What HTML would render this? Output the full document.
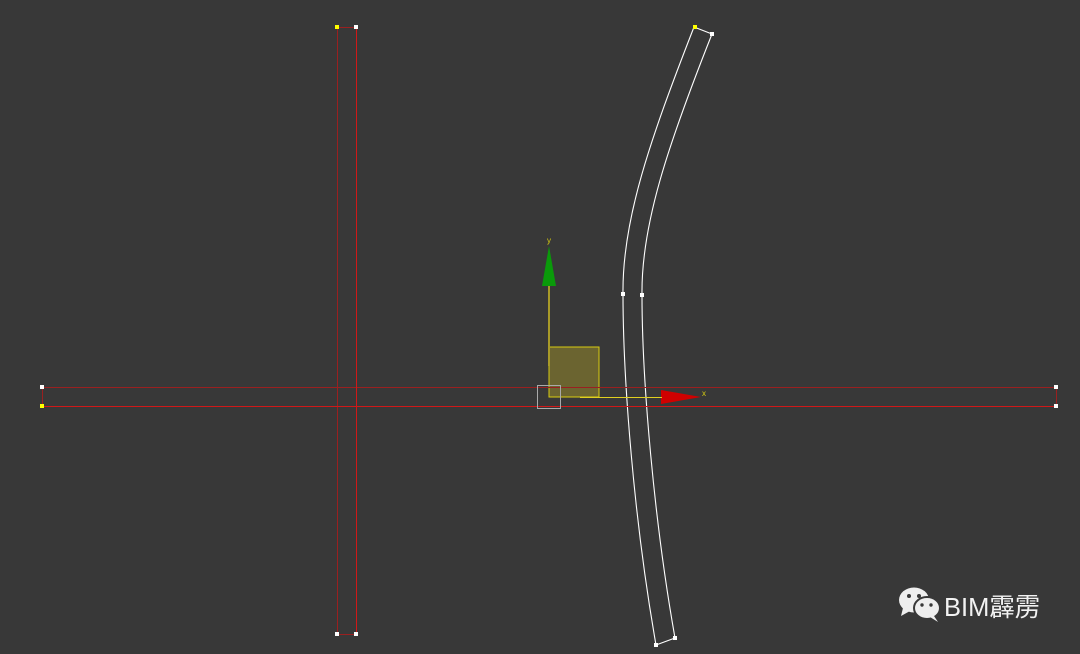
<!DOCTYPE html>
<html><head><style>
html,body{margin:0;padding:0;background:#383838;width:1080px;height:654px;overflow:hidden}
.t{position:absolute;left:944px;top:587px;font:25.5px "Liberation Sans","Noto Sans CJK SC",sans-serif;color:#f2f2f2}
</style></head><body>
<svg width="1080" height="654" style="position:absolute;left:0;top:0" shape-rendering="crispEdges">
<rect x="549" y="347" width="50" height="50" fill="#6b6430" stroke="#d8cc10" stroke-width="1"/>
<g fill="none" stroke="#fff" stroke-width="1.1" shape-rendering="auto">
<path d="M694,27 C650,140 622,220 623,294 C623,380 634,520 656,645"/>
<path d="M712,34 C668,145 641,225 642,295 C642,380 654,520 675,638"/>
<path d="M694,27 L712,34 M656,645 L675,638"/>
</g>
<g fill="#9a2020">
<rect x="337" y="27" width="1" height="607"/>
<rect x="337" y="27" width="19" height="1"/>
<rect x="337" y="634" width="19" height="1"/>
<rect x="42" y="387" width="1014" height="1"/>
<rect x="42" y="387" width="1" height="19"/>
<rect x="1056" y="387" width="1" height="19"/>
</g>
<g fill="#d01818">
<rect x="356" y="27" width="1" height="607"/>
<rect x="42" y="406" width="1014" height="1"/>
</g>
<g fill="#fff"><rect x="621" y="292" width="4" height="4"/><rect x="640" y="293" width="4" height="4"/><rect x="710" y="32" width="4" height="4"/><rect x="654" y="643" width="4" height="4"/><rect x="673" y="636" width="4" height="4"/>
<rect x="354" y="25" width="4" height="4"/><rect x="335" y="632" width="4" height="4"/><rect x="354" y="632" width="4" height="4"/><rect x="40" y="385" width="4" height="4"/><rect x="1054" y="385" width="4" height="4"/><rect x="1054" y="404" width="4" height="4"/></g>
<rect x="693" y="25" width="4" height="4" fill="#ff0"/>
<rect x="335" y="25" width="4" height="4" fill="#ff0"/>
<rect x="40" y="404" width="4" height="4" fill="#ff0"/>
<rect x="548" y="285" width="2" height="81" fill="#a89a28"/>
<g shape-rendering="auto">
<polygon points="549,246 542,286 556,286" fill="#0a9a0a"/>
<polygon points="661,390 661,404 701,397" fill="#d00000"/>
<text x="547" y="243" font-size="8" fill="#d8cc10" font-family="Liberation Sans">y</text>
<text x="702" y="396" font-size="8" fill="#d8cc10" font-family="Liberation Sans">x</text>
</g>
<rect x="580" y="397" width="82" height="1" fill="#e0d020"/>
<rect x="537.5" y="385.5" width="23" height="23" fill="none" stroke="#aaa" stroke-width="1"/>
<g fill="#eee" shape-rendering="auto">
<ellipse cx="914" cy="600" rx="15" ry="12.5"/><polygon points="903,608 901,616 910,611"/>
<ellipse cx="927" cy="608" rx="13" ry="11" stroke="#383838" stroke-width="2"/><polygon points="934,616 938,622 930,617"/>
</g>
<g fill="#383838" shape-rendering="auto"><circle cx="909" cy="596" r="2"/><circle cx="919" cy="596" r="2"/><circle cx="922" cy="605" r="1.7"/><circle cx="931" cy="605" r="1.7"/></g>
</svg>
<div class="t">BIM霹雳</div>
</body></html>
